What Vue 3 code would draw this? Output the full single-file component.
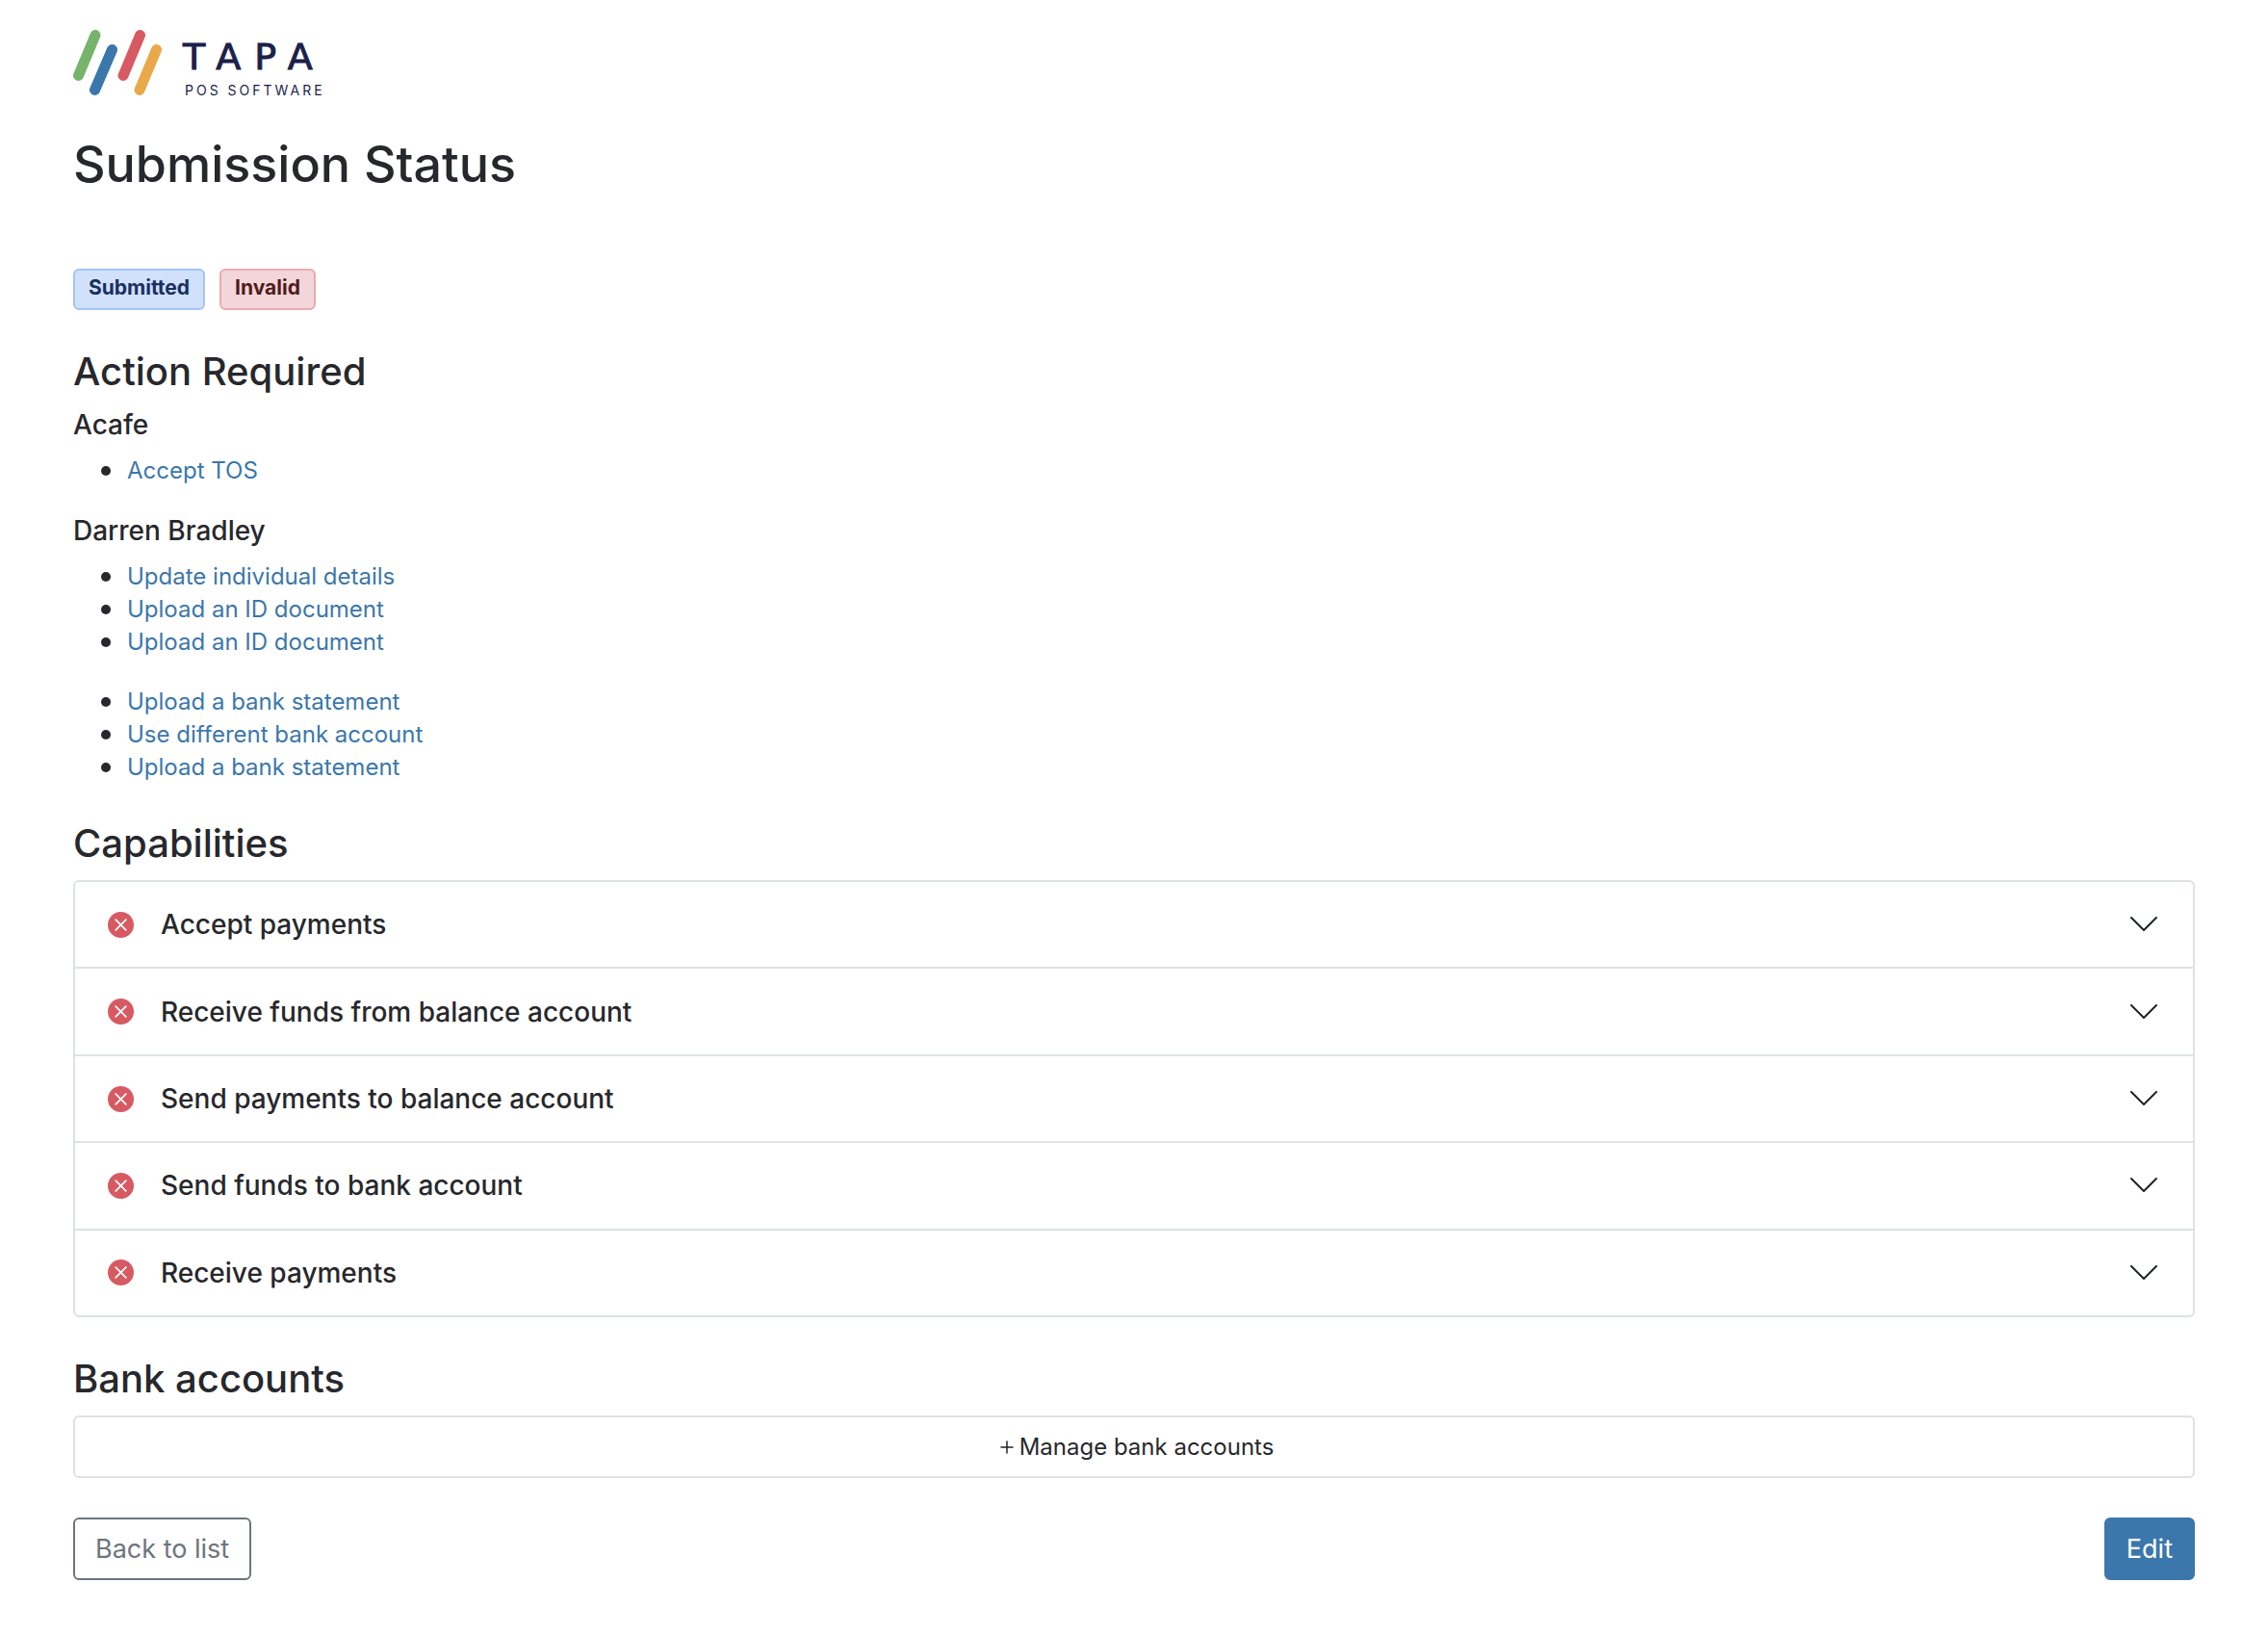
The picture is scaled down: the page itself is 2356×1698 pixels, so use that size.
<script setup>
const actions = [
  { name: 'Acafe', items: ['Accept TOS'] },
  {
    name: 'Darren Bradley',
    items: ['Update individual details', 'Upload an ID document', 'Upload an ID document'],
  },
  {
    name: '',
    items: ['Upload a bank statement', 'Use different bank account', 'Upload a bank statement'],
  },
]

const capabilities = [
  'Accept payments',
  'Receive funds from balance account',
  'Send payments to balance account',
  'Send funds to bank account',
  'Receive payments',
]
</script>

<template>
  <div class="page">
    <header class="brand">
      <svg class="mark" viewBox="0 0 92 68" fill="none" stroke-width="11" stroke-linecap="round" aria-hidden="true">
        <path d="M5.500 47.500 23 5.500" stroke="#76b36b" />
        <path d="M22.500 62.500 40.500 20.500" stroke="#3b77ab" />
        <path d="M52 47.500 69.500 5.500" stroke="#d75a63" />
        <path d="M69 62.500 86.500 20.500" stroke="#e9a94b" />
      </svg>
      <div class="wordmark">
        <span class="name">TAPA</span>
        <span class="tagline">POS SOFTWARE</span>
      </div>
    </header>

    <main>
      <h1>Submission Status</h1>

      <div class="badges">
        <span class="badge submitted">Submitted</span>
        <span class="badge invalid">Invalid</span>
      </div>

      <section class="actions">
        <h2>Action Required</h2>
        <div v-for="(group, g) in actions" :key="g" class="group">
          <h3 v-if="group.name">{{ group.name }}</h3>
          <ul>
            <li v-for="(item, i) in group.items" :key="i"><a href="#">{{ item }}</a></li>
          </ul>
        </div>
      </section>

      <section>
        <h2>Capabilities</h2>
        <div class="accordion">
          <button v-for="name in capabilities" :key="name" type="button" class="row" aria-expanded="false">
            <svg class="status" viewBox="0 0 27 27" aria-hidden="true">
              <circle cx="13.500" cy="13.500" r="13.500" fill="#d75a63" />
              <path d="M8.200 8.200 18.800 18.800M18.800 8.200 8.200 18.800" stroke="#fff" stroke-width="1.700" stroke-linecap="round" />
            </svg>
            <span class="label">{{ name }}</span>
            <svg class="chevron" viewBox="0 0 28 16" fill="none" aria-hidden="true">
              <path d="M1 1 14 14 27 1" stroke="#212529" stroke-width="2" stroke-linecap="round" stroke-linejoin="round" />
            </svg>
          </button>
        </div>
      </section>

      <section>
        <h2>Bank accounts</h2>
        <button type="button" class="manage">
          <svg class="plus" viewBox="0 0 14 14" aria-hidden="true">
            <path d="M7 1V13M1 7H13" stroke="#212529" stroke-width="1.500" stroke-linecap="round" />
          </svg>
          Manage bank accounts
        </button>
      </section>

      <footer class="footer">
        <button type="button" class="btn outline">Back to list</button>
        <button type="button" class="btn primary">Edit</button>
      </footer>
    </main>
  </div>
</template>

<style>
body {
  margin: 0;
  background: #fff;
}
</style>

<style scoped>
.page {
  box-sizing: border-box;
  padding: 31px 76px 56px;
  color: #27282c;
  font-family: Inter, "Liberation Sans", sans-serif;
  font-size: 24px;
  line-height: 34px;
}

.brand {
  display: flex;
  gap: 22px;
  height: 68px;
}

.mark {
  width: 92px;
  height: 68px;
}

.wordmark {
  display: flex;
  flex-direction: column;
  padding-top: 8px;
  color: #1c1f4a;
  white-space: nowrap;
}

.name {
  font-family: "DejaVu Sans", sans-serif;
  font-size: 38px;
  line-height: 40px;
  letter-spacing: 14px;
  -webkit-text-stroke: 1px #1c1f4a;
}

.tagline {
  padding-left: 2px;
  font-size: 14px;
  line-height: 30px;
  letter-spacing: 3px;
}

h1,
h2,
h3 {
  margin: 0;
  font-weight: 500;
}

h1 {
  margin-top: 38px;
  font-size: 52px;
  line-height: 68px;
}

h2 {
  margin-bottom: 14px;
  font-size: 40px;
  line-height: 48px;
}

h3 {
  margin-bottom: 14px;
  font-size: 28px;
  line-height: 34px;
}

.badges {
  display: flex;
  gap: 15px;
  margin: 74px 0 40px;
}

.badge {
  box-sizing: border-box;
  height: 43px;
  padding: 0 14px;
  border: 2px solid;
  border-radius: 6px;
  font-size: 21px;
  font-weight: 700;
  line-height: 36px;
}

.submitted {
  border-color: #a5c2fb;
  background: #d1e1fc;
  color: #1a2f62;
}

.invalid {
  border-color: #e8abb1;
  background: #f3d6d9;
  color: #4f1b20;
}

.actions {
  margin-bottom: 38px;
}

ul {
  margin: 0 0 28px;
  padding-left: 29px;
  list-style: none;
}

li {
  display: flex;
  align-items: center;
  gap: 17px;
}

li::before {
  width: 10px;
  height: 10px;
  border-radius: 50%;
  background: #27282c;
  content: "";
}

a {
  color: #3b77ab;
  text-decoration: none;
}

.accordion {
  box-sizing: border-box;
  display: flex;
  flex-direction: column;
  min-height: 454px;
  margin-bottom: 40px;
  border: 2px solid #dee2e6;
  border-radius: 6px;
}

button {
  box-sizing: border-box;
  margin: 0;
  border: 0;
  background: transparent;
  color: inherit;
  font: inherit;
  cursor: pointer;
}

.row {
  display: flex;
  flex: 1;
  align-items: center;
  gap: 28px;
  padding: 0 37px 0 34px;
  text-align: left;
}

.row + .row {
  border-top: 2px solid #dee2e6;
}

.status {
  width: 27px;
  height: 27px;
}

.label {
  flex: 1;
  font-size: 28px;
  font-weight: 500;
}

.chevron {
  width: 28px;
  height: 16px;
}

.manage {
  display: flex;
  align-items: center;
  justify-content: center;
  gap: 6px;
  width: 100%;
  height: 65px;
  padding: 0 0 0 6px;
  border: 2px solid #dee2e6;
  border-radius: 6px;
}

.plus {
  width: 14px;
  height: 14px;
}

.footer {
  display: flex;
  justify-content: space-between;
  margin-top: 41px;
}

.btn {
  height: 65px;
  padding: 0 21px;
  border: 2px solid;
  border-radius: 6px;
  font-size: 27px;
}

.outline {
  border-color: #6c757d;
  color: #6c757d;
}

.primary {
  border-color: #3b77ab;
  background: #3b77ab;
  color: #fff;
}
</style>
